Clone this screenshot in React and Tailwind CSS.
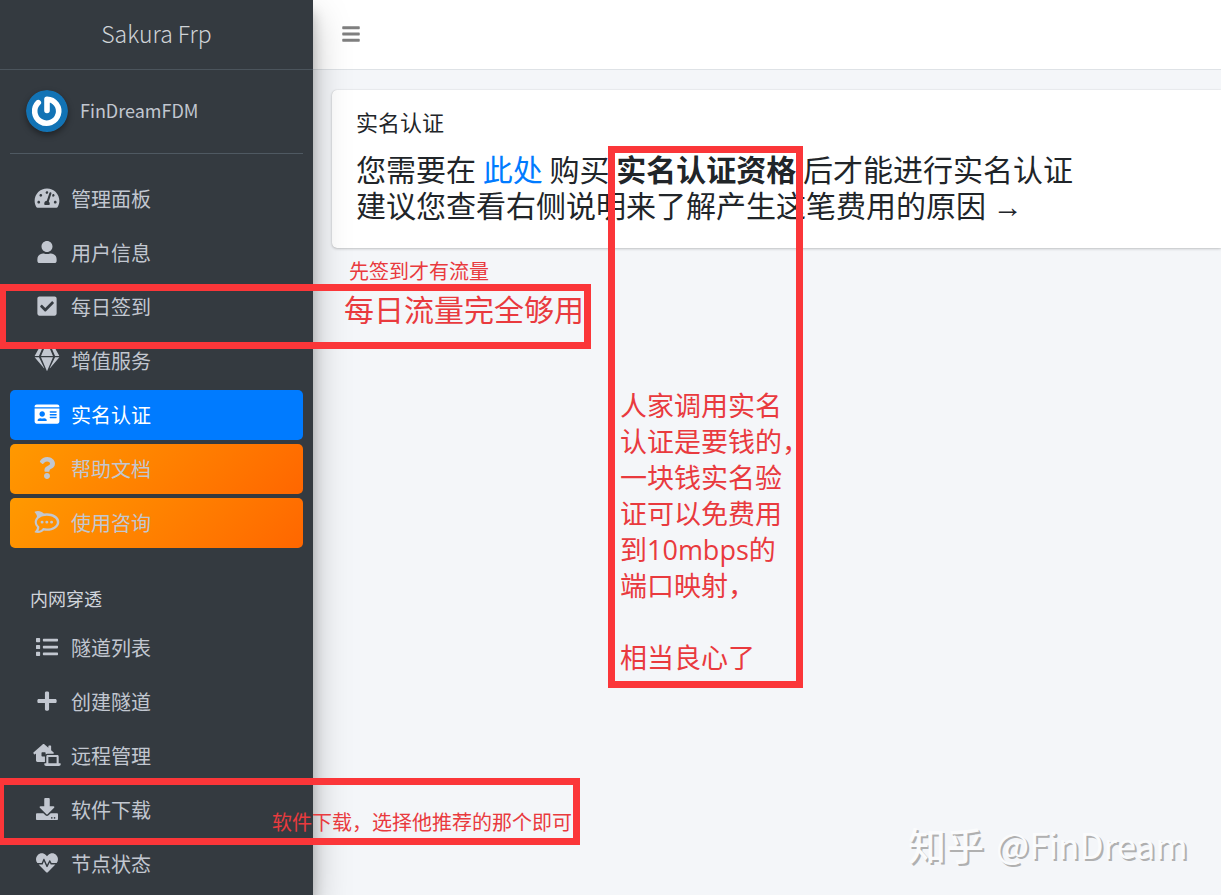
import React from "react";
import {
  FaTachometerAlt,
  FaUser,
  FaCheckSquare,
  FaIdCard,
  FaQuestion,
  FaRocketchat,
  FaList,
  FaPlus,
  FaLaptopHouse,
  FaDownload,
  FaHeartbeat,
  FaBars,
} from "react-icons/fa";

const mainItems = [
  { label: "管理面板", icon: FaTachometerAlt },
  { label: "用户信息", icon: FaUser },
  { label: "每日签到", icon: FaCheckSquare },
  { label: "增值服务", icon: DiamondIcon },
  { label: "实名认证", icon: FaIdCard, tone: "active" },
  { label: "帮助文档", icon: FaQuestion, tone: "orange" },
  { label: "使用咨询", icon: FaRocketchat, tone: "orange" },
];

const tunnelItems = [
  { label: "隧道列表", icon: FaList },
  { label: "创建隧道", icon: FaPlus },
  { label: "远程管理", icon: FaLaptopHouse },
  { label: "软件下载", icon: FaDownload },
  { label: "节点状态", icon: FaHeartbeat },
];

const tones = {
  plain: "text-[#c2c7d0]",
  active: "bg-[#007bff] text-white",
  orange: "bg-linear-135 from-[#ff9900] to-[#ff6600] text-[#c2c7d0]",
};

function DiamondIcon() {
  return (
    <svg viewBox="0 0 576 512" fill="currentColor" aria-hidden="true">
      <path d="M485.500 0L576 160H474.900L405.700 0h79.800zm-128 0l69.200 160H149.300L218.500 0h139zm-267 0h79.800l-69.200 160H0L90.500 0zM0 192h100.700l123 251.700c1.500 3.100-2.700 5.900-5 3.300L0 192zm148.200 0h279.600l-137 318.200c-1 2.400-4.500 2.400-5.500 0L148.200 192zm204.100 251.700l123-251.700H576L357.300 446.900c-2.300 2.700-6.500-.1-5-3.200z" />
    </svg>
  );
}

function PowerAvatar() {
  return (
    <svg viewBox="0 0 42 42" className="size-[42px] shrink-0 rounded-full shadow-[0_3px_6px_rgba(0,0,0,0.4)]" aria-hidden="true">
      <circle cx="21" cy="21" r="21" fill="#1273b5" />
      <path d="M12.300 12.600A12 12 0 1 0 21 9.200V20.500" fill="none" stroke="#fff" strokeWidth="5.600" strokeLinecap="round" strokeLinejoin="round" />
    </svg>
  );
}

function NavItem({ label, icon: Icon, tone = "plain" }) {
  return (
    <li>
      <a href="#" className={`flex h-[50px] items-center rounded-[5px] pl-5 text-[20px] ${tones[tone]}`}>
        <span className="mr-2 flex w-[33px] justify-center pb-[2px] [&>svg]:h-[22px] [&>svg]:w-7">
          <Icon />
        </span>
        {label}
      </a>
    </li>
  );
}

function Sidebar() {
  return (
    <aside className="z-10 w-[313px] shrink-0 bg-[#343a40] shadow-[0_17px_35px_rgba(0,0,0,0.25),0_12px_12px_rgba(0,0,0,0.22)]">
      <a href="#" className="flex h-[70px] items-center justify-center border-b border-[#4b545c] pb-[2px] text-[23px] font-light text-[#cfd3d7]">
        Sakura Frp
      </a>
      <div className="px-[10px]">
        <div className="flex h-[84px] items-center gap-3 border-b border-[#4f5962] pb-[2px] pl-4">
          <PowerAvatar />
          <a href="#" className="text-[18px] text-[#c2c7d0]">FinDreamFDM</a>
        </div>
        <nav className="pt-5">
          <ul className="flex flex-col gap-1">
            {mainItems.map((item) => (
              <NavItem key={item.label} {...item} />
            ))}
            <li className="flex h-[67px] items-end px-5 pb-[7px] text-[18px] text-[#d0d4db]">内网穿透</li>
            {tunnelItems.map((item) => (
              <NavItem key={item.label} {...item} />
            ))}
          </ul>
        </nav>
      </div>
    </aside>
  );
}

function Annotations() {
  return (
    <div className="pointer-events-none absolute inset-0 z-20 overflow-hidden font-['Open_Sans','Noto_Sans_CJK_SC',sans-serif] text-[#e93a3e]">
      <div className="absolute -left-px top-[284px] h-[65px] w-[592px] border-[7px] border-[#fb3639]" />
      <div className="absolute -left-[3px] top-[778px] h-[67px] w-[583px] border-[7px] border-[#fb3639]" />
      <div className="absolute left-[608px] top-[146px] h-[542px] w-[195px] border-[7px] border-[#fb3639]" />
      <p className="absolute left-[349px] top-[257px] whitespace-nowrap text-[20px] leading-[30px]">先签到才有流量</p>
      <p className="absolute left-[344px] top-[292px] whitespace-nowrap text-[30px] leading-[36px]">每日流量完全够用</p>
      <p className="absolute left-[620px] top-[388px] whitespace-nowrap text-[27px] leading-[36px]">
        人家调用实名<br />
        认证是要钱的，<br />
        一块钱实名验<br />
        证可以免费用<br />
        到10mbps的<br />
        端口映射，<br />
        <br />
        相当良心了
      </p>
      <p className="absolute left-[272px] top-[808px] whitespace-nowrap text-[20px] leading-[30px]">软件下载，选择他推荐的那个即可</p>
      <p className="absolute left-[908px] top-[818px] flex gap-3 whitespace-nowrap font-['Noto_Sans_CJK_SC',sans-serif] leading-[52px] text-[#fafbfc] [text-shadow:2px_2px_0_#b0b0b0]">
        <span className="text-[38px] font-medium">知乎</span>
        <span className="text-[35px]">@FinDream</span>
      </p>
    </div>
  );
}

export default function App() {
  return (
    <div className="relative flex min-h-screen bg-[#f4f6f9] font-['Noto_Sans_CJK_SC',sans-serif] text-[#212529]">
      <Sidebar />
      <div className="flex min-w-0 flex-1 flex-col">
        <header className="flex h-[70px] items-center border-b border-[#dee2e6] bg-white px-7 pb-[2px]">
          <button type="button" aria-label="菜单" className="flex h-10 items-center text-[20px] text-[#7f7f7f]">
            <FaBars />
          </button>
        </header>
        <main className="py-5 pl-[19px]">
          <section className="rounded-l-[5px] bg-white px-6 pb-[23px] pt-[15px] shadow-[0_0_1px_rgba(0,0,0,0.2),0_1px_3px_rgba(0,0,0,0.2)]">
            <h5 className="mb-[13px] text-[22px] leading-[32px]">实名认证</h5>
            <p className="text-[30px] leading-[36px]">
              您需要在 <a href="#" className="text-[#007bff]">此处</a> 购买 <b>实名认证资格</b> 后才能进行实名认证
              <br />
              建议您查看右侧说明来了解产生这笔费用的原因 <span className="font-['Liberation_Sans',sans-serif]">→</span>
            </p>
          </section>
        </main>
      </div>
      <Annotations />
    </div>
  );
}
